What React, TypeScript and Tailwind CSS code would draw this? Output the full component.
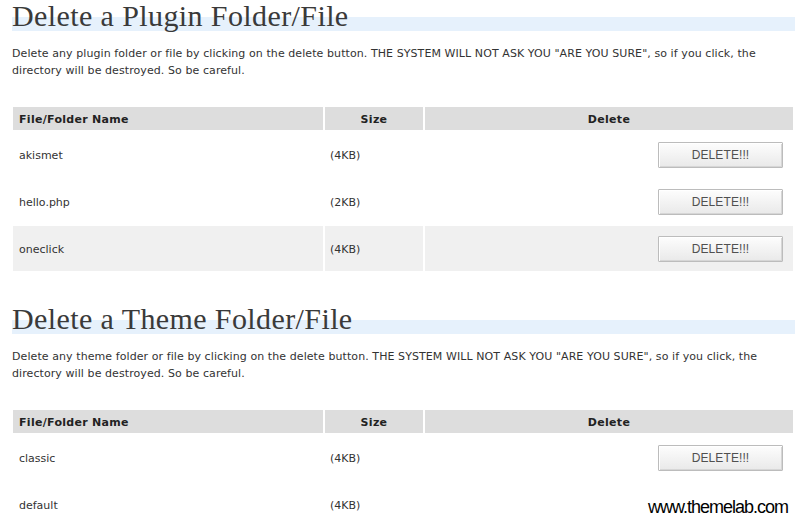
import React from "react";

type Row = { name: string; size: string };

const plugins: Row[] = [
  { name: "akismet", size: "(4KB)" },
  { name: "hello.php", size: "(2KB)" },
  { name: "oneclick", size: "(4KB)" },
];

const themes: Row[] = [
  { name: "classic", size: "(4KB)" },
  { name: "default", size: "(4KB)" },
];

function DeleteButton() {
  return (
    <button className="w-[125px] h-[26px] border border-[#bcbcbc] rounded-[1px] bg-[linear-gradient(to_bottom,#fdfdfd,#e9e9e9)] shadow-[inset_1px_1px_0_#ffffff,inset_-1px_-1px_0_#d6d6d6] text-[12px] leading-none text-[#505050] font-['Liberation_Sans',Arial,sans-serif] tracking-[0.1px]">
      DELETE!!!
    </button>
  );
}

function Section({ title, kind, rows }: { title: string; kind: string; rows: Row[] }) {
  return (
    <section>
      <h2 className="h-[34px] leading-[32px] text-[30px] tracking-[0.4px] text-[#3a3a3a] font-['Liberation_Serif',Georgia,serif] mr-[5px] bg-[linear-gradient(to_bottom,transparent_17px,#e6f1fc_17px,#e6f1fc_31px,transparent_31px)]">
        {title}
      </h2>
      <p className="mt-[11px] text-[11px] leading-[17px] tracking-[0.08px] text-[#333] pr-[20px]">
        Delete any {kind} folder or file by clicking on the delete button. THE SYSTEM WILL NOT ASK YOU "ARE YOU SURE", so if you click, the directory will be destroyed. So be careful.
      </p>
      <table className="mt-[26px] -ml-[1px] w-[784px] border-separate border-spacing-[2px] text-[11px] text-[#333]">
        <thead>
          <tr className="h-[23px]">
            <th className="w-[310px] bg-[#dddddd] text-left pl-[6px] pt-[4px] font-bold tracking-[0.3px] text-[#222]">File/Folder Name</th>
            <th className="w-[98px] bg-[#dddddd] text-center pt-[4px] font-bold tracking-[0.3px] text-[#222]">Size</th>
            <th className="bg-[#dddddd] text-center pt-[4px] font-bold tracking-[0.3px] text-[#222]">Delete</th>
          </tr>
        </thead>
        <tbody>
          {rows.map((r, i) => (
            <tr key={r.name} className={"h-[45px] " + (i === 2 ? "bg-[#f0f0f0]" : "")}>
              <td className="pl-[6px] pt-[4px]">{r.name}</td>
              <td className="pl-[5px] pt-[4px]">{r.size}</td>
              <td className="text-right pr-[10px]">
                <DeleteButton />
              </td>
            </tr>
          ))}
        </tbody>
      </table>
    </section>
  );
}

export default function App() {
  return (
    <div className="relative w-[800px] h-[526px] overflow-hidden bg-white pl-[12px] font-['DejaVu_Sans',Verdana,sans-serif]">
      <Section title="Delete a Plugin Folder/File" kind="plugin" rows={plugins} />
      <div className="mt-[30px]">
        <Section title="Delete a Theme Folder/File" kind="theme" rows={themes} />
      </div>
      <div className="absolute right-0 bottom-0 w-[160px] h-[36px] bg-white flex items-start justify-end pr-[12px] pt-[7px]">
        <span className="text-[18px] leading-[20px] text-black font-['Liberation_Sans',Arial,sans-serif] tracking-[-1px]">
          www.themelab.com
        </span>
      </div>
    </div>
  );
}
